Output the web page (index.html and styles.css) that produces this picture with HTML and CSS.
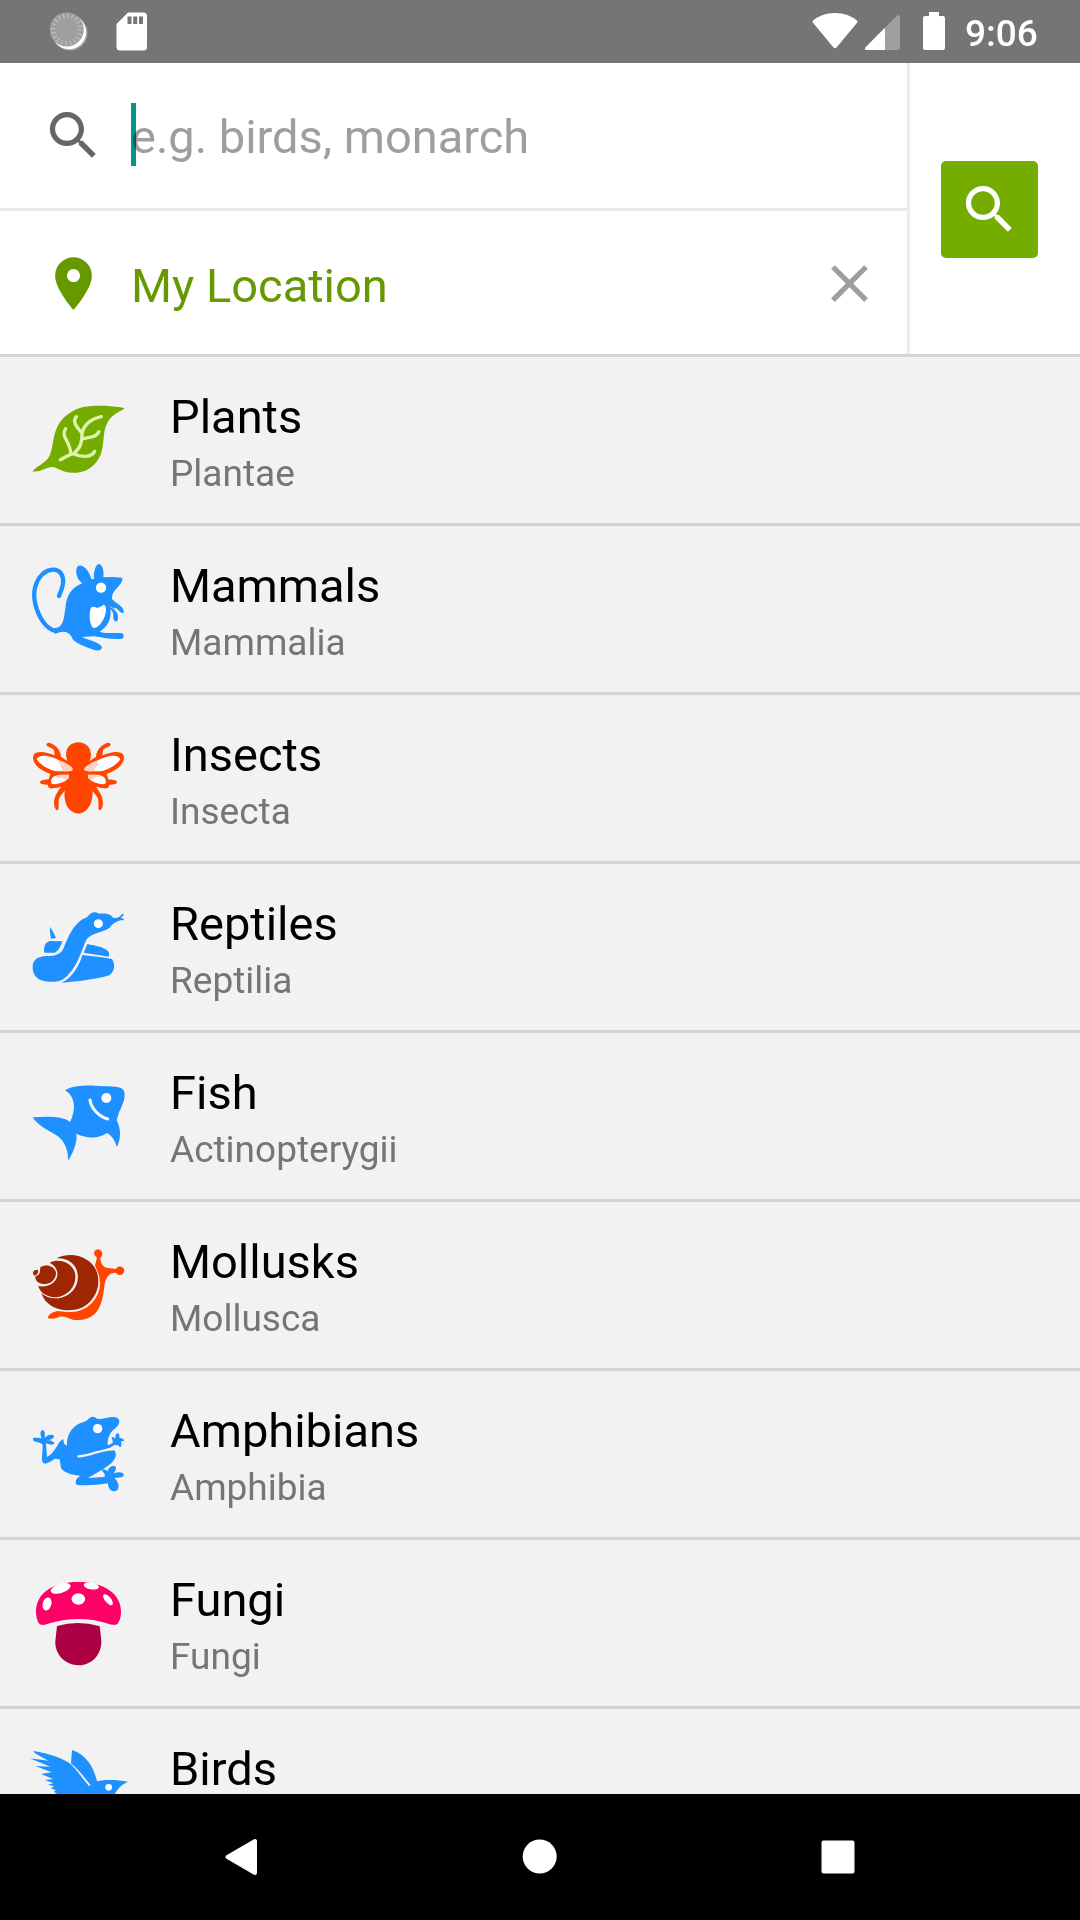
FILE: index.html
```html
<!DOCTYPE html>
<html lang="en">
<head>
<meta charset="utf-8">
<title>Explore</title>
<link rel="stylesheet" href="styles.css">
</head>
<body>
<div class="screen">
  <header class="status">
    <svg class="sync" width="40" height="40" viewBox="1 0.5 40 40"><circle cx="21" cy="21.500" r="17.500" fill="#a4a4a4"/><circle cx="20" cy="20.500" r="17.200" fill="#fff"/><circle cx="17.800" cy="18" r="17" fill="#9e9e9e"/><circle cx="17.800" cy="18" r="13.800" fill="none" stroke="#bbb" stroke-width="5" stroke-dasharray="1.300 3.035"/></svg>
    <svg class="sd" width="32" height="40" viewBox="0 0 32 40"><path fill="#fff" fill-rule="evenodd" d="M12 .5h15.500a3.500 3.500 0 0 1 3.500 3.500v31a3.500 3.500 0 0 1-3.500 3.500h-23.500a3.500 3.500 0 0 1-3.500-3.500v-23zM11.500 4.500v7.500h4v-7.500zM17.200 4.500v7.500h4v-7.500zM23 4.500v7.500h4v-7.500z"/></svg>
    <svg class="system" width="136" height="40" viewBox="0 0 136 40"><path fill="#fff" d="M.6 9Q9.500 1 23 1t22.400 8q.3 1-.5 2L24.500 35.500q-1.500 1.300-3 0L1.200 11Q.2 10 .6 9z"/><path fill="#9f9f9f" d="M53.500 35.500 85 3.700q3-2 3 1V36q0 2-2 2H54q-2-.5-.5-2.500z"/><path fill="#fff" d="M53.300 35.500 73 15.700V38H54.500q-2.500 0-1.200-2.500z"/><path fill="#fff" d="M117 0h10v4h4q2 0 2 2v30q0 2-2 2h-18q-2 0-2-2V6q0-2 2-2h4z"/></svg>
    <span class="clock">9:06</span>
  </header>

  <section class="search">
    <div class="fields">
      <div class="field query">
        <svg class="icon" viewBox="0 0 24 24"><path fill="#666" d="M15.500 14h-.79l-.28-.27C15.410 12.590 16 11.110 16 9.500 16 5.910 13.090 3 9.500 3S3 5.910 3 9.500 5.910 16 9.500 16c1.610 0 3.090-.59 4.230-1.570l.27.280v.79l5 4.990L20.490 19l-4.990-5zm-6 0C7.010 14 5 11.990 5 9.500S7.010 5 9.500 5 14 7.010 14 9.500 11.990 14 9.500 14z"/></svg>
        <span class="caret"></span><span class="hint">e.g. birds, monarch</span>
      </div>
      <div class="field place">
        <svg class="icon" viewBox="0 0 24 24"><path fill="#690" d="M12 2C8.130 2 5 5.130 5 9c0 5.250 7 13 7 13s7-7.750 7-13c0-3.870-3.130-7-7-7zm0 9.500a2.500 2.500 0 0 1 0-5 2.500 2.500 0 0 1 0 5z"/></svg>
        <span class="location">My Location</span>
        <svg class="icon" viewBox="0 0 24 24"><path fill="#9e9e9e" d="M19 6.410 17.590 5 12 10.590 6.410 5 5 6.410 10.590 12 5 17.590 6.410 19 12 13.410 17.590 19 19 17.590 13.410 12z"/></svg>
      </div>
    </div>
    <div class="action">
      <div class="button"><svg class="icon" viewBox="0 0 24 24"><path fill="#fff" d="M15.500 14h-.79l-.28-.27C15.410 12.590 16 11.110 16 9.500 16 5.910 13.090 3 9.500 3S3 5.910 3 9.500 5.910 16 9.500 16c1.610 0 3.090-.59 4.230-1.570l.27.280v.79l5 4.990L20.490 19l-4.990-5zm-6 0C7.010 14 5 11.990 5 9.500S7.010 5 9.500 5 14 7.010 14 9.500 11.990 14 9.500 14z"/></svg></div>
    </div>
  </section>

  <main class="list">
    <div class="row">
      <svg class="taxon" viewBox="0 -99 360 498"><path fill="#74ac00" d="M38 245C42 232 76 222 88 199C98 178 98 146 108 120C123 78 163 57 190 51C225 45 270 47 300 52Q312 53 313 57C300 63 274 75 262 98C247 124 254 166 241 196C228 225 205 246 170 248C145 250 124 243 109 234Q97 228 82 234Q60 245 38 245z"/><g fill="none" stroke="#dcf5a8" stroke-width="10" stroke-linecap="round" stroke-linejoin="round"><path d="M121 209C137 202 146 193 161 191C183 172 186 155 186 132C191 104 213 87 244 80M169 80C157 93 167 107 183 126M137 116C120 138 151 155 152 189M161 191C185 203 213 203 224 184M186 147C207 140 226 145 237 125"/></g></svg>
      <div class="label"><div class="name">Plants</div><div class="latin">Plantae</div></div>
    </div>
    <div class="row">
      <svg class="taxon" viewBox="0 -87 360 498"><path fill="none" stroke="#1e90ff" stroke-width="13" stroke-linecap="round" d="M117 123C129 95 135 74 123 55C111 39 87 41 68 57C44 79 38 115 46 148C56 188 78 221 106 228"/><path fill="#1e90ff" d="M104 219C130 220 132 190 136 160C139 121 155 97 187 85C169 72 164 47 173 34C187 24 209 48 214 73L222 71C220 48 228 27 237 27C248 30 253 48 250 67Q280 64 305 68Q310 71 306 78C299 97 274 107 276 132C288 146 309 151 312 171Q308 178 300 170Q290 158 280 157C291 171 298 184 292 198Q284 203 280 191C280 178 280 170 271 162C276 190 262 217 239 230C259 237 286 233 306 234Q316 242 307 251C278 255 247 247 223 244L186 246C205 257 238 260 246 276C246 286 236 288 223 285C198 275 158 263 155 245C145 231 130 225 106 237z"/><circle cx="243" cy="98" r="15.500" fill="#fff"/><path fill="#fff" d="M213 158Q220 152 231 159Q245 155 251 149Q258 150 258 166C257 190 236 222 220 219C208 209 206 175 213 158z"/><path fill="none" stroke="#f2f2f2" stroke-width="2" d="M270 154L292 171"/></svg>
      <div class="label"><div class="name">Mammals</div><div class="latin">Mammalia</div></div>
    </div>
    <div class="row">
      <svg class="taxon" viewBox="0 -105 360 498"><g id="bee-side"><path fill="#ff4500" d="M172 105Q140 94 123 80C122 64 111 47 91 39Q81 37 79 43C78 50 96 52 102 61L104 76C80 67 54 61 42 73C34 86 43 104 61 117Q75 126 91 132L86 148C75 150 63 149 60 156C61 164 72 164 83 164Q86 178 98 175Q113 174 123 170C110 190 99 203 103 228Q107 243 114 240C118 233 113 211 119 202Q128 188 140 176L172 155z"/><path fill="#fff" d="M50 87C61 68 101 82 117 91C138 101 155 109 158 117Q157 124 141 124H112C88 122 57 102 50 87z"/><path fill="#ffd0c4" d="M115 91C137 97 158 110 159 119Q156 124 130 124Q122 113 115 91z"/><path fill="#fff" d="M94 159C90 144 102 136 121 134H151C149 147 130 159 108 162Q96 164 94 159z"/><path fill="#ffd0c4" d="M104 139Q121 132 152 135Q148 144 137 151Q128 141 104 139z"/></g><use href="#bee-side" transform="matrix(-1 0 0 1 351 0)"/><path fill="#ff4500" d="M138 76C138 52 153 37 175 37S213 52 213 76Q212 91 204 101Q192 108 192 119V128H204V147L217 175C221 207 210 248 176 251C139 248 129 208 135 176L147 147V128H160V119Q158 108 147 101Q139 91 138 76z"/></svg>
      <div class="label"><div class="name">Insects</div><div class="latin">Insecta</div></div>
    </div>
    <div class="row">
      <svg class="taxon" viewBox="0 -108 360 498"><path fill="#1e90ff" d="M38 204C36 180 54 169 78 168C109 168 122 163 131 144C143 113 160 75 187 58Q203 53 209 43C220 33 230 37 238 41C252 40 271 39 280 54Q298 56 305 43Q312 40 311 46L302 54Q313 55 312 61Q301 58 284 68Q277 71 273 79C261 96 217 96 199 119C184 153 169 212 126 240C105 249 67 247 52 234Q38 222 38 204zM90 80Q101 96 108 114L93 116Q89 98 90 80zM127 124C122 138 116 153 104 158H73C70 145 74 125 91 123zM202 132C228 137 261 143 267 158V170L191 158zM187 165C217 169 251 172 276 177C286 192 285 214 268 226C229 238 172 245 124 248C156 236 179 195 187 165z"/><circle cx="235" cy="71" r="13.500" fill="#fff"/></svg>
      <div class="label"><div class="name">Reptiles</div><div class="latin">Reptilia</div></div>
    </div>
    <div class="row">
      <svg class="taxon" viewBox="0 -111 360 498"><path fill="#1e90ff" d="M135 61C155 48 190 46 225 47C262 50 296 47 308 57C322 73 309 102 297 127L290 151C303 176 304 204 291 231C284 212 278 199 261 189C235 207 202 206 169 191C173 218 159 247 145 272C144 243 136 212 108 195C77 178 52 164 38 142C77 140 127 137 150 156Q160 138 162 112C162 91 153 71 135 61z"/><circle cx="259" cy="84" r="15" fill="#fff"/><path fill="none" stroke="#fff" stroke-width="9" stroke-linecap="round" d="M210 90C214 117 238 140 263 147"/></svg>
      <div class="label"><div class="name">Fish</div><div class="latin">Actinopterygii</div></div>
    </div>
    <div class="row">
      <svg class="taxon" viewBox="0 -114 360 498"><path fill="#ff4500" d="M83 233C88 220 98 217 112 213C154 219 198 213 220 180C242 151 239 111 225 76L231 53C218 45 220 29 234 28C248 28 251 46 241 54C242 71 249 82 263 84Q279 86 288 87C293 76 311 78 313 91C313 107 294 110 288 98C267 98 258 112 254 132C250 164 246 195 230 215C212 236 191 241 161 240C140 233 125 225 112 233Q92 239 83 233z"/><circle cx="153" cy="129" r="87" fill="#f2f2f2"/><path fill="#9e2602" d="M109 55C160 31 216 54 231 97C244 139 225 180 190 201C149 220 82 214 64 159C83 179 120 180 144 164C184 140 184 78 141 60Q126 53 109 55z"/><path fill="#9e2602" d="M89 68C119 54 156 68 165 99C172 137 145 167 110 172C86 172 60 161 55 138C79 143 105 132 111 111C116 91 105 76 89 68z"/><path fill="#9e2602" d="M61 82C77 71 103 76 108 98C109 122 85 136 65 131C52 128 45 119 46 109Q60 105 60 92zM39 96Q43 88 53 89Q59 99 45 107Q38 105 39 96z"/></svg>
      <div class="label"><div class="name">Mollusks</div><div class="latin">Mollusca</div></div>
    </div>
    <div class="row">
      <svg class="taxon" viewBox="0 -102 360 498"><path fill="#1e90ff" d="M68 119C59 111 44 112 39 106Q38 96 46 98L65 100C60 89 60 77 68 76C76 77 75 91 74 99Q82 89 94 89Q103 89 102 96Q100 101 85 106Q100 107 103 115Q101 121 88 118L78 115L81 156C97 148 108 130 118 111C124 105 131 102 130 101L132 116L141 122C139 95 152 68 180 55Q202 49 207 40C216 32 223 34 232 42C249 44 274 32 291 38C303 44 298 60 287 69C268 82 263 99 263 120Q270 122 279 112L275 98Q280 93 286 102Q285 87 292 85Q300 85 298 99Q310 98 312 107Q308 110 302 109Q307 117 303 124Q300 129 293 119Q288 122 285 119Q269 130 257 132Q275 132 284 137C295 153 278 173 264 182C244 197 222 207 204 219L252 216C260 210 249 201 246 197Q247 190 256 194L264 199C263 189 275 179 285 184Q293 189 281 205Q299 198 309 205Q316 213 304 217L283 219C294 228 300 246 292 255C283 263 270 259 266 246L263 235C235 239 201 243 172 240C163 235 167 219 181 213C151 208 130 202 123 189L119 163L105 161Q87 173 76 176C64 176 65 160 67 145z"/><circle cx="233" cy="71" r="14" fill="#fff"/><path fill="none" stroke="#f2f2f2" stroke-width="7" stroke-linecap="round" d="M175 154C212 153 237 134 278 133"/></svg>
      <div class="label"><div class="name">Amphibians</div><div class="latin">Amphibia</div></div>
    </div>
    <div class="row">
      <svg class="taxon" viewBox="0 -90 360 498"><path fill="#f06" d="M48 130C46 66 103 36 175 36S306 68 303 130Q302 149 293 161Q286 167 270 163C208 142 145 142 79 163Q63 168 55 158Q49 146 48 130z"/><g fill="#fff"><ellipse cx="122" cy="55" rx="31" ry="14" transform="rotate(-18 122 55)"/><ellipse cx="214" cy="48" rx="23" ry="10" transform="rotate(10 214 48)"/><ellipse cx="175" cy="87" rx="20.500" ry="17.500"/><ellipse cx="81" cy="102" rx="13" ry="20" transform="rotate(17 81 102)"/><ellipse cx="264" cy="89" rx="9" ry="20" transform="rotate(-40 264 89)"/></g><path fill="#ab0041" d="M111 168Q175 149 239 169L244 210C246 255 214 285 177 286C135 286 104 253 106 214z"/></svg>
      <div class="label"><div class="name">Fungi</div><div class="latin">Fungi</div></div>
    </div>
    <div class="row">
      <svg class="taxon" viewBox="60 27 360 498"><path fill="#1e90ff" d="M100 153C148 161 188 174 213 193C235 215 248 237 267 258L272 256C252 231 238 211 213 190L216 150C258 164 281 200 291 244C321 238 354 240 384 245C367 252 351 267 345 282C335 330 290 353 245 350C204 340 171 308 164 282H172L161 275L168 271L152 265L163 259L144 254L160 250L135 240L159 237L123 222L155 217L106 198L151 200L89 175L146 182Q121 170 104 159z"/><circle cx="326" cy="262" r="10" fill="#fff"/></svg>
      <div class="label"><div class="name">Birds</div></div>
    </div>
  </main>

  <nav class="nav">
    <svg width="36" height="40" viewBox="0 0 36 40"><path fill="#fff" stroke="#fff" stroke-width="4" stroke-linejoin="round" d="M4.500 20 32 4v32z"/></svg>
    <svg width="36" height="40" viewBox="0 0 36 40"><circle cx="17.700" cy="19.500" r="17" fill="#fff"/></svg>
    <svg width="36" height="40" viewBox="0 0 36 40"><rect x="1.500" y="3.500" width="33" height="33" rx="2" fill="#fff"/></svg>
  </nav>
</div>
</body>
</html>
```
FILE: styles.css
```css
* { box-sizing: border-box; }
body { margin: 0; font-family: Roboto, sans-serif; background: #f2f2f2; }
svg { display: block; flex: none; }
.screen { width: 1080px; height: 1920px; display: flex; flex-direction: column; overflow: hidden; }

.status { height: 63px; flex: none; display: flex; align-items: flex-start; padding: 12px 42px 0 50px; background: #757575; color: #fff; }
.sd { margin-left: 26px; }
.system { margin-left: auto; }
.clock { margin-left: 17px; width: 73px; font-size: 37px; font-weight: 500; line-height: 43px; white-space: nowrap; }

.search { height: 294px; flex: none; display: flex; background: #fff; border-bottom: 3px solid #d3d3d3; }
.fields { width: 910px; border-right: 3px solid #ebebeb; display: flex; flex-direction: column; }
.field { display: flex; align-items: center; padding: 0 26px 0 42px; font-size: 47px; line-height: 56px; }
.query { height: 148px; border-bottom: 3px solid #ebebeb; }
.place { height: 143px; padding-top: 2px; }
.icon { width: 63px; height: 63px; }
.caret { width: 5px; height: 63px; margin: 0 -5px 2px 26px; background: #009688; }
.hint { color: #9e9e9e; padding-top: 3px; mix-blend-mode: multiply; }
.location { flex: 1; margin-left: 26px; padding-top: 4px; color: #690; }
.action { flex: 1; display: flex; align-items: center; padding: 2px 0 0 31px; }
.button { width: 97px; height: 97px; border-radius: 5px; background: #74ac00; display: flex; align-items: center; justify-content: center; }

.list { flex: 1; min-height: 0; overflow: hidden; }
.row { height: 169px; display: flex; padding-left: 20px; border-bottom: 3px solid #d3d3d3; }
.taxon { width: 120px; height: 166px; }
.label { margin-left: 30px; padding-top: 32px; }
.name { font-size: 47px; line-height: 56px; color: #000; }
.latin { font-size: 37px; line-height: 57px; color: #757575; }

.nav { height: 126px; flex: none; display: flex; align-items: center; justify-content: space-between; padding: 0 224px 0 223px; background: #000; }
```
